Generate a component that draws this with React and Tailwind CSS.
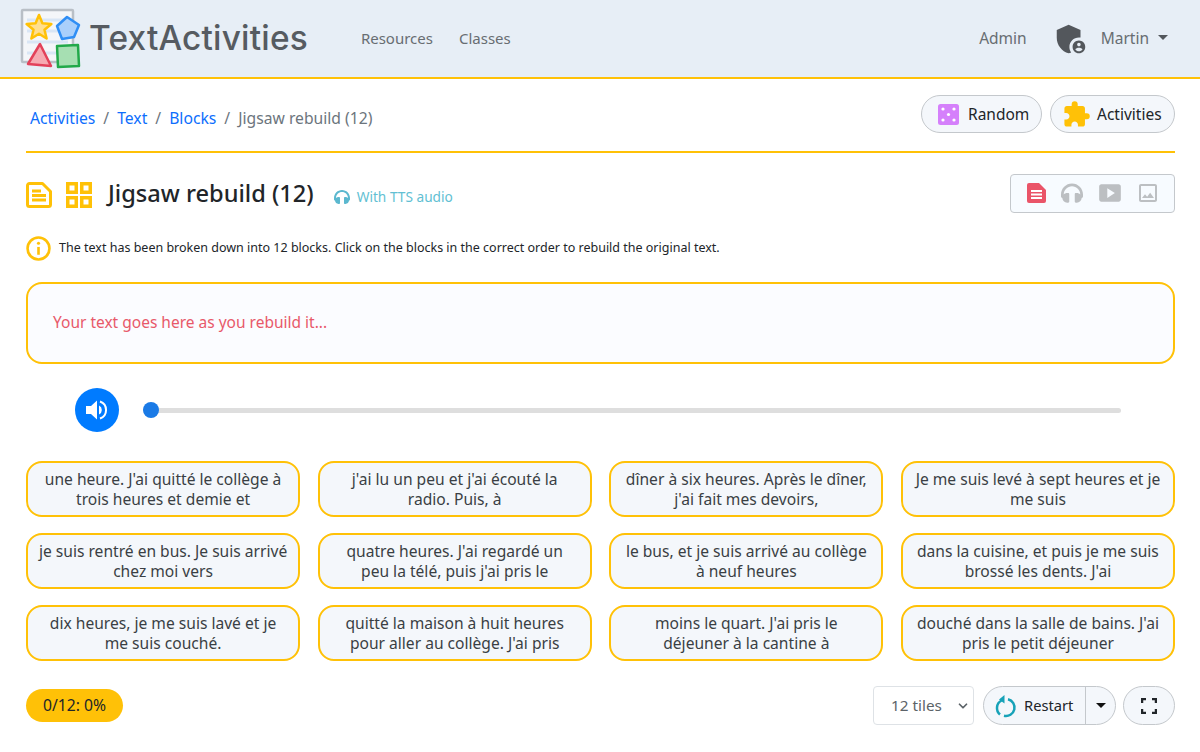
import { ChevronDown } from "lucide-react";
import { FaHeadphones } from "react-icons/fa";
import { MdAdminPanelSettings, MdExtension, MdSmartDisplay, MdOutlineImage } from "react-icons/md";

const tiles = [
  ["une heure. J'ai quitté le collège à", "trois heures et demie et"],
  ["j'ai lu un peu et j'ai écouté la", "radio. Puis, à"],
  ["dîner à six heures. Après le dîner,", "j'ai fait mes devoirs,"],
  ["Je me suis levé à sept heures et je", "me suis"],
  ["je suis rentré en bus. Je suis arrivé", "chez moi vers"],
  ["quatre heures. J'ai regardé un", "peu la télé, puis j'ai pris le"],
  ["le bus, et je suis arrivé au collège", "à neuf heures"],
  ["dans la cuisine, et puis je me suis", "brossé les dents. J'ai"],
  ["dix heures, je me suis lavé et je", "me suis couché."],
  ["quitté la maison à huit heures", "pour aller au collège. J'ai pris"],
  ["moins le quart. J'ai pris le", "déjeuner à la cantine à"],
  ["douché dans la salle de bains. J'ai", "pris le petit déjeuner"],
];

function Logo() {
  return (
    <svg width="64" height="64" viewBox="0 0 64 64" className="shrink-0">
      <rect x="2" y="3" width="51" height="52" fill="#f4f6f9" stroke="#b9bfc6" strokeWidth="2.500" rx="1" />
      <path d="M7 13h41M7 24h41M7 35h41M7 46h41" stroke="#d9e6f5" strokeWidth="3" />
      <path d="M19 8l3.400 8.300 9 .7-6.900 5.800 2.100 8.700-7.600-4.700-7.600 4.700 2.100-8.700L6.600 17l9-.7z" fill="#ffdf8e" stroke="#ffc107" strokeWidth="2.500" strokeLinejoin="round" />
      <path d="M47 10l12 8-5 12-12 2-5-13z" fill="#a9cffb" stroke="#2f8ef5" strokeWidth="2.500" strokeLinejoin="round" />
      <path d="M20 37L8 57l23 2z" fill="#f6aab2" stroke="#e3415a" strokeWidth="2.500" strokeLinejoin="round" />
      <path d="M37 39l21-1 1 21-21 1z" fill="#a6dfb2" stroke="#22a94a" strokeWidth="2.500" strokeLinejoin="round" />
    </svg>
  );
}

function FileIcon({ className, filled }) {
  if (filled) {
    return (
      <svg width="19" height="20" viewBox="0 0 19 20" className={className}>
        <path d="M2 0h10l7 7v11a2 2 0 0 1-2 2H2a2 2 0 0 1-2-2V2a2 2 0 0 1 2-2z" fill="currentColor" />
        <path d="M4 8h11M4 11.500h11M4 15h11" stroke="#fff" strokeWidth="1.800" />
      </svg>
    );
  }
  return (
    <svg width="26" height="26" viewBox="0 0 26 26" className={className} fill="none" stroke="currentColor">
      <path d="M3.500 1.500h13l8 8v13a2 2 0 0 1-2 2h-19a2 2 0 0 1-2-2v-19a2 2 0 0 1 2-2z" strokeWidth="3" strokeLinejoin="round" />
      <path d="M6 9h9M6 13.500h14M6 18h14" strokeWidth="3" />
    </svg>
  );
}

function GridIcon() {
  return (
    <svg width="26" height="26" viewBox="0 0 26 26" fill="none" stroke="#ffc107" strokeWidth="3.500">
      <rect x="1.750" y="1.750" width="8.500" height="8.500" />
      <rect x="15.750" y="1.750" width="8.500" height="8.500" />
      <rect x="1.750" y="15.750" width="8.500" height="8.500" />
      <rect x="15.750" y="15.750" width="8.500" height="8.500" />
    </svg>
  );
}

function Pill({ icon, label, className }) {
  return (
    <div className={`flex h-[38px] items-center rounded-full border border-[#c4c8cc] bg-[#f4f7fb] text-[#212529] ${className}`}>
      {icon}
      <span className="mt-[2px]">{label}</span>
    </div>
  );
}

export default function App() {
  return (
    <div className="min-h-[752px] overflow-hidden bg-white text-[16px] text-[#212529] [font-family:'Noto_Sans',sans-serif]">
      <header className="flex h-[79px] items-center border-b-2 border-[#ffc107] bg-[#e7eef6] pl-[20px] pr-[32px]">
        <Logo />
        <span className="ml-[5px] text-[33.400px] font-medium tracking-[0.2px] text-[#565b61] [font-family:Inter,sans-serif]">TextActivities</span>
        <nav className="ml-[53px] flex gap-[26px] text-[15px] text-[#686d72]">
          <span>Resources</span>
          <span>Classes</span>
        </nav>
        <div className="ml-auto flex items-center text-[15.500px] text-[#686d72]">
          <span>Admin</span>
          <MdAdminPanelSettings size={38} className="ml-[25px] text-[#53575c]" />
          <span className="ml-[11px]">Martin</span>
          <span className="mb-[3px] ml-[9px] h-0 w-0 border-x-[5.500px] border-t-[5.500px] border-x-transparent border-t-[#53575c]" />
        </div>
      </header>

      <main className="pl-[26px] pr-[25px]">
        <div className="flex h-[74px] items-center justify-between border-b-2 border-[#ffc107] pl-[4px]">
          <div className="mt-[8px] flex gap-[8px] text-[15.700px] text-[#6c757d]">
            <span className="text-[#0d6efd]">Activities</span>
            <span>/</span>
            <span className="text-[#0d6efd]">Text</span>
            <span>/</span>
            <span className="text-[#0d6efd]">Blocks</span>
            <span>/</span>
            <span>Jigsaw rebuild (12)</span>
          </div>
          <div className="mb-[2px] flex gap-[8px] text-[15.500px]">
            <Pill
              className="w-[121px] pl-[16px]"
              label="Random"
              icon={
                <svg width="21" height="21" viewBox="0 0 21 21" className="mr-[9px]">
                  <rect width="21" height="21" rx="2.500" fill="#d580fb" />
                  <g fill="#fff">
                    <circle cx="5" cy="5" r="1.600" />
                    <circle cx="16" cy="5" r="1.600" />
                    <circle cx="10.500" cy="10.500" r="1.600" />
                    <circle cx="5" cy="16" r="1.600" />
                    <circle cx="16" cy="16" r="1.600" />
                  </g>
                </svg>
              }
            />
            <Pill
              className="w-[125px] pl-[11px]"
              label="Activities"
              icon={<MdExtension size={29} className="mr-[6px] text-[#ffc107]" />}
            />
          </div>
        </div>

        <div className="mt-[24px] flex h-[36px] items-center">
          <FileIcon className="text-[#ffc107]" />
          <span className="ml-[14px]"><GridIcon /></span>
          <h1 className="mb-[2px] ml-[16px] text-[23.600px] font-medium text-[#212529]">Jigsaw rebuild (12)</h1>
          <FaHeadphones size={16} className="ml-[20px] mt-[4px] text-[#5bb8cf]" />
          <span className="ml-[7px] mt-[4px] text-[13.700px] text-[#62bfd3]">With TTS audio</span>
          <div className="mb-[4px] ml-auto flex h-[39px] w-[165px] items-center justify-center gap-[15px] rounded border border-[#c4c8cc] bg-[#f7fbff]">
            <FileIcon filled className="text-[#ea5468]" />
            <FaHeadphones size={22} className="text-[#bcbfc2]" />
            <MdSmartDisplay size={26} className="-mx-[1px] text-[#bcbfc2]" />
            <MdOutlineImage size={24} className="-mx-[1px] text-[#bcbfc2]" />
          </div>
        </div>

        <div className="mt-[23px] flex h-[24px] items-center text-[12.500px] text-[#212529]">
          <svg width="25" height="25" viewBox="0 0 24 24" fill="none">
            <circle cx="12" cy="12" r="10.500" stroke="#ffc107" strokeWidth="2.500" />
            <path d="M12 10.500V18" stroke="#ffc107" strokeWidth="2.500" />
            <circle cx="12" cy="7" r="1.500" fill="#ffc107" />
          </svg>
          <span className="ml-[8px]">The text has been broken down into 12 blocks. Click on the blocks in the correct order to rebuild the original text.</span>
        </div>

        <div className="mt-[22px] flex h-[82px] items-center rounded-[16px] border-2 border-[#ffc107] bg-[#fbfcff] px-[25px] text-[15.500px] text-[#e8596a]">
          Your text goes here as you rebuild it...
        </div>

        <div className="mt-[24px] flex items-center pl-[49px] pr-[54px]">
          <div className="flex h-[44px] w-[44px] items-center justify-center rounded-full bg-[#007bff]">
            <svg width="24" height="24" viewBox="0 0 24 24" fill="#fff">
              <path d="M1 8h5l6-5.500v19L6 16H1z" />
              <path d="M14 7.500a5 5 0 0 1 0 9z" />
              <path d="M15 3.500a9 9 0 0 1 0 17" stroke="#fff" strokeWidth="2" fill="none" />
            </svg>
          </div>
          <div className="relative ml-[24px] h-[5px] flex-1 rounded-full bg-[#dedede]">
            <span className="absolute left-0 top-[-6px] h-[16px] w-[16px] rounded-full bg-[#1a7ae6]" />
          </div>
        </div>

        <div className="mt-[29px] grid grid-cols-4 gap-x-[17.500px] gap-y-[16px]">
          {tiles.map((t, i) => (
            <div key={i} className="flex h-[56px] flex-col items-center justify-center rounded-[16px] border-2 border-[#ffc107] bg-[#f4f7fb] text-[15.600px] leading-[20px] text-[#3a3f44]">
              {t.map((line, j) => (
                <span key={j}>{line}</span>
              ))}
            </div>
          ))}
        </div>

        <div className="mt-[25px] flex items-center">
          <span className="flex h-[33px] w-[97px] items-center justify-center rounded-full bg-[#ffc107] text-[15.700px] text-[#212529]">0/12: 0%</span>
          <div className="ml-auto flex h-[39px] w-[101px] items-center justify-between rounded border border-[#dee2e6] bg-white pl-[17px] pr-[3px] text-[15.300px] text-[#5c6368]">
            <span>12 tiles</span>
            <ChevronDown size={14} strokeWidth={3} />
          </div>
          <div className="ml-[9px] flex h-[39px] w-[133px] items-center rounded-full border border-[#c4c8cc] bg-[#f4f7fb] text-[14.700px]">
            <svg width="22" height="24" viewBox="0 0 22 24" fill="none" stroke="#17a2b8" strokeWidth="2.500" className="ml-[11px]">
              <path d="M13 5.200A8.500 8.500 0 0 1 9 21.800" />
              <path d="M5 20.500A8.500 8.500 0 0 1 6.500 6.500" />
              <path d="M9.500 1L4 5.500l5.500 4z" fill="#17a2b8" stroke="none" />
            </svg>
            <span className="ml-[7px]">Restart</span>
            <span className="ml-auto flex h-full w-[30px] items-center justify-center border-l border-[#c4c8cc]">
              <span className="h-0 w-0 border-x-[5px] border-t-[5px] border-x-transparent border-t-[#111]" />
            </span>
          </div>
          <div className="ml-[7px] flex h-[39px] w-[52px] items-center justify-center rounded-full border border-[#c4c8cc] bg-[#f4f7fb]">
            <svg width="16" height="16" viewBox="0 0 16 16" fill="none" stroke="#212529" strokeWidth="2.500">
              <path d="M1 5V1h4M11 1h4v4M15 11v4h-4M5 15H1v-4" />
            </svg>
          </div>
        </div>
      </main>
    </div>
  );
}
